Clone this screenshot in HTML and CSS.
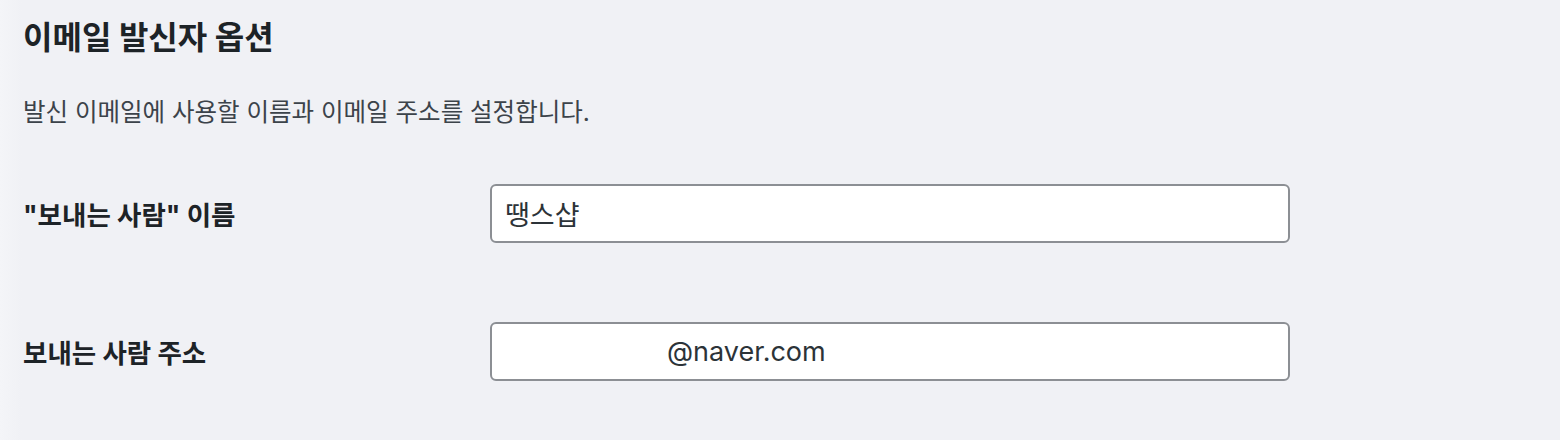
FILE: index.html
```html
<!DOCTYPE html>
<html lang="ko">
<head>
    <meta charset="UTF-8">
    <title>이메일 발신자 옵션</title>
    <link rel="stylesheet" href="styles.css">
</head>
<body>
    <div class="wrap">
        <h2 class="section-title">이메일 발신자 옵션</h2>
        <p class="description">발신 이메일에 사용할 이름과 이메일 주소를 설정합니다.</p>

        <div class="form-table">
            <div class="form-row">
                <label class="row-label" for="fromName">"보내는 사람" 이름</label>
                <input class="text-input" type="text" id="fromName" value="땡스샵">
            </div>
            <div class="form-row">
                <label class="row-label" for="fromAddress">보내는 사람 주소</label>
                <!-- 주소 앞부분은 가려져 있음 -->
                <input class="text-input redacted" type="email" id="fromAddress" value="@naver.com">
            </div>
        </div>
    </div>
</body>
</html>
```

FILE: styles.css
```css
body {
    margin: 0;
    font-family: Inter, "Noto Sans CJK KR", sans-serif;
    background: linear-gradient(to right, #f4f5f8 0, #f0f1f5 22px);
    color: #1d2327;
}
.wrap {
    padding: 16px 0 0 23px;
}
.section-title {
    margin: 0;
    font-size: 32px;
    font-weight: 700;
    line-height: 44px;
    color: #1d2327;
}
.description {
    margin: 35px 0 0;
    font-size: 24.5px;
    line-height: 34px;
    color: #3c434a;
}
.form-table {
    display: grid;
    row-gap: 79px;
    margin-top: 55px;
}
.form-row {
    display: grid;
    grid-template-columns: 467px 800px;
    align-items: center;
}
.row-label {
    font-size: 26.5px;
    font-weight: 700;
    color: #1d2327;
}
.text-input {
    box-sizing: border-box;
    height: 59px;
    padding: 0 13px;
    border: 2px solid #8c8f94;
    border-radius: 6px;
    background-color: #fff;
    font-family: Inter, "Noto Sans CJK KR", sans-serif;
    font-size: 27px;
    color: #2c3338;
}
.redacted {
    text-indent: 162px;
}
```
